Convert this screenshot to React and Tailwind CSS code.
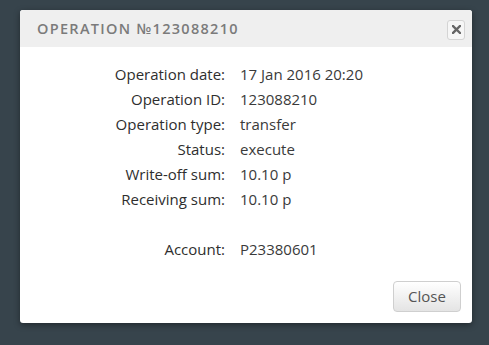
export default function App() {
  const rows = [
    ['Operation date:', '17 Jan 2016 20:20'],
    ['Operation ID:', '123088210'],
    ['Operation type:', 'transfer'],
    ['Status:', 'execute'],
    ['Write-off sum:', '10.10 р'],
    ['Receiving sum:', '10.10 р'],
    ['', ''],
    ['Account:', 'P23380601'],
  ];

  return (
    <div
      className="w-[489px] h-[345px] bg-[#37444c] pt-[10px] pl-[20px] overflow-hidden"
      style={{ fontFamily: '"Open Sans", "Liberation Sans", sans-serif' }}
    >
      <div className="w-[452px] h-[313px] bg-white rounded-[3px] shadow-[0_2px_6px_rgba(0,0,0,0.4)] flex flex-col overflow-hidden">
        {/* Header */}
        <div className="h-[37px] bg-[#efefef] flex items-center justify-between pl-[17px] pr-[7px]">
          <h1 className="text-[14.5px] font-semibold tracking-[1.3px] text-[#7b7b7b]">
            OPERATION №123088210
          </h1>
          <button className="w-[18px] h-[20px] mt-[2px] border border-[#d4d4d4] rounded-[3px] bg-[#f6f6f6] flex items-center justify-center">
            <svg width="9" height="9" viewBox="0 0 9 9">
              <path d="M1 1 L8 8 M8 1 L1 8" stroke="#666" strokeWidth="2.4" strokeLinecap="square" />
            </svg>
          </button>
        </div>

        {/* Details */}
        <div className="grid grid-cols-[205px_1fr] gap-x-[15px] pt-[15px] text-[15px] leading-[25px] text-[#3a3a3a]">
          {rows.map(([label, value], i) => (
            <div key={i} className="contents">
              <div className="text-right text-[#2e2e2e]">{label || '\u00a0'}</div>
              <div>{value}</div>
            </div>
          ))}
        </div>

        {/* Footer */}
        <div className="mt-auto flex justify-end pr-[11px] pb-[11px]">
          <button className="w-[68px] h-[31px] border border-[#cfcfcf] rounded-[4px] bg-gradient-to-b from-white to-[#e4e4e4] text-[15px] text-[#555]">
            Close
          </button>
        </div>
      </div>
    </div>
  );
}
